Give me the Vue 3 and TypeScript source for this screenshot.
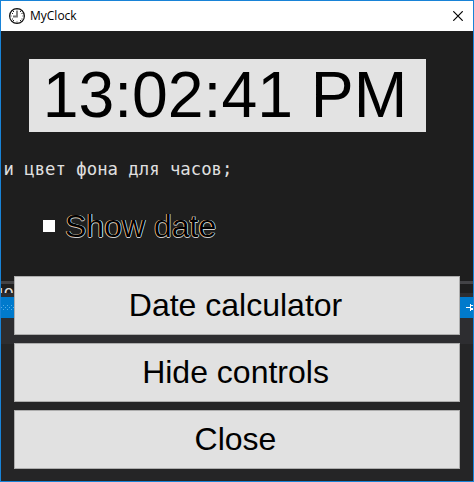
<script setup lang="ts">
import { ref } from 'vue'

const time = ref('13:02:41 PM')
const actions = ['Date calculator', 'Hide controls', 'Close']
</script>

<template>
  <main class="window">
    <header class="titlebar">
      <svg class="clock-icon" width="16" height="16" viewBox="0 0 16 16">
        <circle cx="8" cy="8" r="7.4" fill="#fff" stroke="#111" stroke-width="1.2" />
        <path d="M8 3V8.500H4" fill="none" stroke="#777" stroke-width="1.8" />
        <path d="M7.5 2h1M2 7.500v1M14 7.500v1M7.500 14h1M11 3.500h1M12.500 5.500h1M12.500 11h1M11 12.500h1M4 12.500h1M3 11h1M3 5.500h1M4 3.500h1" fill="none" stroke="#222" stroke-width="1" />
      </svg>
      <span class="title">MyClock</span>
      <svg class="close-icon" width="10" height="10" viewBox="0 0 10 10">
        <path d="M0.300 0.300L9.700 9.700M9.700 0.300L0.300 9.700" stroke="#000" stroke-width="1.2" />
      </svg>
    </header>
    <section class="client">
      <div class="backdrop">
        <div class="editor"></div>
        <div class="splitter"></div>
        <div class="line"><span>но</span></div>
        <div class="gap"></div>
        <div class="accent">
          <svg width="13" height="6" viewBox="0 0 13 6" class="grip">
            <path d="M2 .5h1M6 .5h1M10 .5h1M0 2.500h1M4 2.500h1M8 2.500h1M12 2.500h1M2 4.500h1M6 4.500h1M10 4.500h1" stroke="#55aee8" />
          </svg>
          <svg width="7" height="7" viewBox="0 0 7 7" class="pin">
            <path d="M0 3.500h4M4.500 0v7M5 1.500h2M5 4.500h2M5 5.500h2" fill="none" stroke="#fff" stroke-width="1" />
          </svg>
        </div>
        <div class="panel"></div>
        <div class="footer"></div>
      </div>
      <div class="content">
        <div class="time">{{ time }}</div>
        <div class="code">и цвет фона для часов;</div>
        <label class="toggle"><i class="box"></i><span>Show date</span></label>
        <div class="actions">
          <button v-for="action in actions" :key="action">{{ action }}</button>
        </div>
      </div>
    </section>
  </main>
</template>

<style>
body {
  margin: 0;
}
</style>

<style scoped>
.window {
  box-sizing: border-box;
  width: 474px;
  height: 482px;
  border: 1px solid #1883d7;
  display: flex;
  flex-direction: column;
  overflow: hidden;
  font-family: "Liberation Sans", sans-serif;
  color: #000;
}
.titlebar {
  height: 30px;
  flex: none;
  display: flex;
  align-items: center;
  background: #fff;
  box-sizing: border-box;
  padding: 0 10px 1px 8px;
}
.title {
  flex: 1;
  margin-left: 5px;
  font: 12px "Open Sans", sans-serif;
}
.client {
  flex: 1;
  display: grid;
  min-height: 0;
}
.backdrop,
.content {
  grid-area: 1 / 1;
  min-width: 0;
}
.backdrop {
  display: flex;
  flex-direction: column;
  background: #1e1e1e;
}
.editor {
  height: 250px;
}
.splitter {
  height: 3px;
  background: #434346;
}
.line {
  height: 9px;
  overflow: hidden;
  display: flex;
  align-items: flex-start;
  color: #ddd;
  font: 17.3px/17px "DejaVu Sans Mono", monospace;
}
.line span {
  margin-left: -8px;
}
.gap {
  height: 4px;
  background: #2d2d30;
}
.accent {
  height: 21px;
  background: #007acc;
  display: flex;
  align-items: center;
  justify-content: space-between;
}
.panel {
  height: 26px;
  background: #2d2d30;
}
.footer {
  flex: 1;
  background: #252526;
}
.content {
  position: relative;
  display: flex;
  flex-direction: column;
}
.time {
  box-sizing: border-box;
  width: 397px;
  height: 73px;
  margin: 28px 0 0 28px;
  padding-right: 5px;
  background: #e3e3e3;
  font-size: 64.3px;
  line-height: 73px;
  text-align: center;
  white-space: nowrap;
}
.code {
  margin: 26px 0 0 2.500px;
  height: 22px;
  color: #e0e0e0;
  font: 17.3px/22px "DejaVu Sans Mono", monospace;
  white-space: pre;
}
.toggle {
  margin: 26px 0 0 42px;
  height: 40px;
  display: flex;
  align-items: center;
  font-size: 32px;
  line-height: 40px;
  text-shadow: -0.8px 0 0 #ffc080, 0.8px 0 0 #b0e4ff, 0 0.5px 0 #ccc, 0 -0.5px 0 #ccc;
}
.box {
  width: 12px;
  height: 12px;
  margin-right: 10px;
  background: #fff;
}
.actions {
  margin: 30px 13px 0;
  display: flex;
  flex-direction: column;
  gap: 8px;
}
button {
  box-sizing: border-box;
  height: 59px;
  padding: 0 3px 0 0;
  border: 1px solid #adadad;
  border-radius: 0;
  background: #e1e1e1;
  color: #000;
  font: 32px/57px "Liberation Sans", sans-serif;
}
</style>
